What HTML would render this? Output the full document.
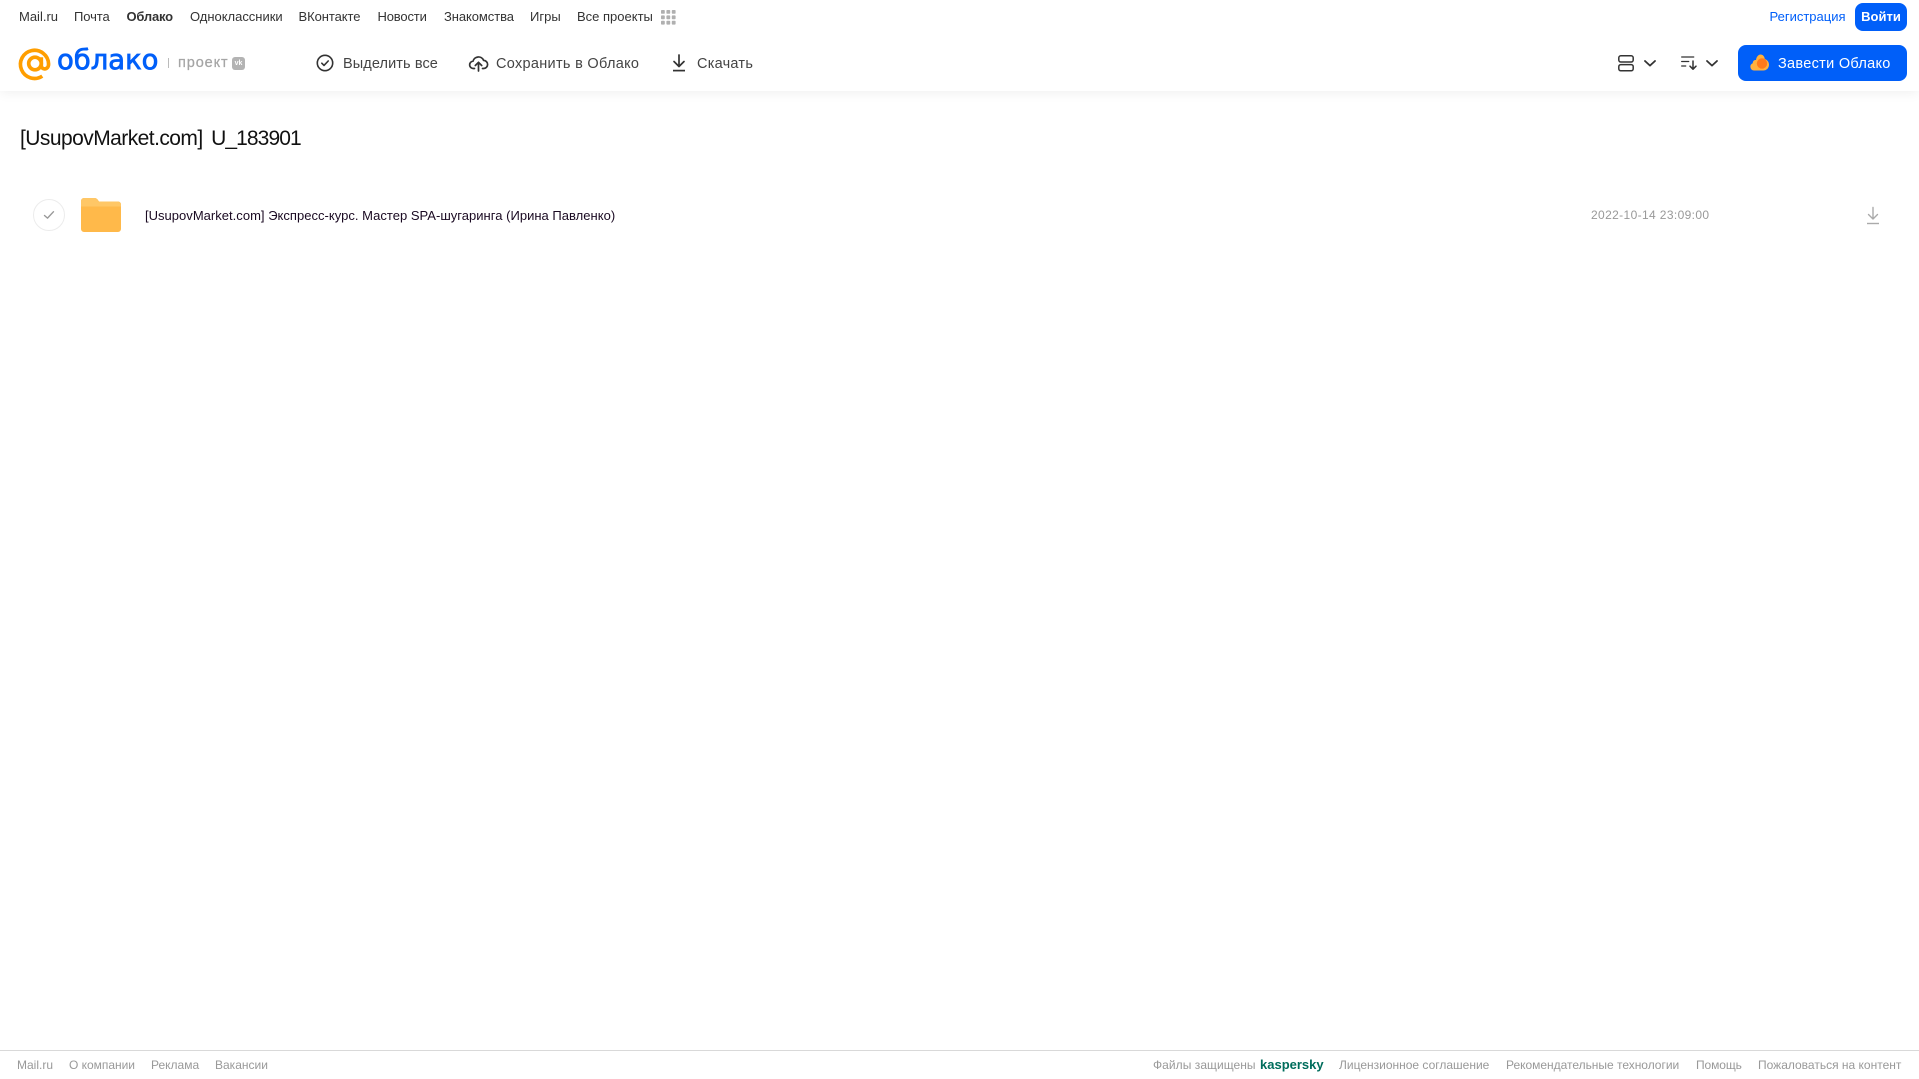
<!DOCTYPE html>
<html lang="ru"><head><meta charset="utf-8"><title>Облако</title>
<style>
html,body{margin:0;padding:0;background:#fff;width:1919px;height:1079px;overflow:hidden}
body{position:relative;font-family:"Liberation Sans",Arial,sans-serif}
a,span.t{position:absolute;white-space:nowrap;text-decoration:none;display:block}
svg{position:absolute;display:block;overflow:visible}
.n{top:8px;font-size:13px;line-height:17px;color:#333}
.a{top:55px;font-size:14.5px;line-height:18px;color:#444}
.f{top:1057px;font-size:12px;line-height:16px;color:#999}
#hd{position:absolute;left:0;top:0;width:1919px;height:91px;background:#fff;box-shadow:0 1px 12px rgba(0,0,0,.07)}
</style></head><body>
<div id="hd"></div>
<a class="n" style="left:19px;letter-spacing:0">Mail.ru</a>
<a class="n" style="left:74px;letter-spacing:-.1px">Почта</a>
<a class="n" style="left:126.5px;font-weight:bold;color:#333;letter-spacing:-.2px">Облако</a>
<a class="n" style="left:190px;letter-spacing:-.02px">Одноклассники</a>
<a class="n" style="left:298.5px;letter-spacing:-.07px">ВКонтакте</a>
<a class="n" style="left:377.5px;letter-spacing:-.16px">Новости</a>
<a class="n" style="left:444px;letter-spacing:-.08px">Знакомства</a>
<a class="n" style="left:530px;letter-spacing:0">Игры</a>
<a class="n" style="left:577px;letter-spacing:0">Все проекты</a>
<svg style="left:661px;top:10px" width="15" height="15" fill="#b0b0b0"><rect x="0" y="0" width="3.8" height="3.8" rx=".8"/><rect x="5.4" y="0" width="3.8" height="3.8" rx=".8"/><rect x="10.8" y="0" width="3.8" height="3.8" rx=".8"/><rect x="0" y="5.4" width="3.8" height="3.8" rx=".8"/><rect x="5.4" y="5.4" width="3.8" height="3.8" rx=".8"/><rect x="10.8" y="5.4" width="3.8" height="3.8" rx=".8"/><rect x="0" y="10.8" width="3.8" height="3.8" rx=".8"/><rect x="5.4" y="10.8" width="3.8" height="3.8" rx=".8"/><rect x="10.8" y="10.8" width="3.8" height="3.8" rx=".8"/></svg>
<a class="n" style="left:1769.5px;color:#005ff9;letter-spacing:0">Регистрация</a>
<a style="left:1855px;top:3px;width:52px;height:28px;border-radius:8px;background:#005ff9;color:#fff;font-size:13px;font-weight:bold;line-height:28px;text-align:center">Войти</a>

<svg style="left:19px;top:47px" width="32" height="33" viewBox="0 0 33 33" fill="none" stroke="#ff9e00" stroke-width="3.8"><circle cx="16.5" cy="16.5" r="6.5"/><path d="M23 10v8.5c0 5 7.500 5 7.500-1.500A14.500 14.500 0 1 0 24 29.500"/></svg>
<span class="t" style="left:57px;top:41px;font-size:28px;line-height:38px;color:#005ff9;-webkit-text-stroke:.8px #005ff9;font-family:'DejaVu Sans',sans-serif;transform-origin:0 50%;transform:scaleX(.98)">облако</span>
<div style="position:absolute;left:168px;top:58px;width:1px;height:10px;background:#bbb"></div>
<span class="t" style="left:178px;top:54px;font-size:14.5px;line-height:18px;color:#a5a5a5;letter-spacing:.9px;-webkit-text-stroke:.25px #a5a5a5">проект</span>
<div style="position:absolute;left:232px;top:57px;width:13px;height:13px;border-radius:3px;background:#b3b3b3;color:#fff;font-size:7px;font-weight:bold;line-height:13px;text-align:center">vk</div>

<svg style="left:316px;top:54px" width="18" height="18" viewBox="0 0 18 18" fill="none" stroke="#333" stroke-width="1.6" stroke-linecap="round" stroke-linejoin="round"><circle cx="9" cy="9" r="7.7"/><path d="M5.8 9.2l2.2 2.2 4.2-4.4"/></svg>
<a class="a" style="left:343px;letter-spacing:.1px">Выделить все</a>
<svg style="left:469px;top:54px" width="19" height="18" viewBox="0 0 19 18" fill="none" stroke="#333" stroke-width="1.7" stroke-linecap="round" stroke-linejoin="round"><path d="M5.5 14.5H4.6A3.6 3.6 0 0 1 4 7.2 5.6 5.6 0 0 1 14.6 6.4 4 4 0 0 1 14.5 14.5h-1"/><path d="M9.5 17V8.5M6.3 11.5l3.200-3.200 3.200 3.200"/></svg>
<a class="a" style="left:496px;letter-spacing:.3px">Сохранить в Облако</a>
<svg style="left:671px;top:54px" width="16" height="18" viewBox="0 0 16 18" fill="none" stroke="#333" stroke-width="1.7" stroke-linecap="round" stroke-linejoin="round"><path d="M8 1v11M3 7.500l5 5 5-5"/><path d="M2 16.600h12" stroke-linecap="butt"/></svg>
<a class="a" style="left:697px;letter-spacing:.25px">Скачать</a>

<svg style="left:1618px;top:55px" width="16" height="17" viewBox="0 0 16 17" fill="none" stroke="#333" stroke-width="1.5"><rect x=".8" y=".8" width="14.4" height="6.2" rx="2"/><rect x=".8" y="9.6" width="14.4" height="6.2" rx="2"/></svg>
<svg style="left:1644px;top:60px" width="12" height="7" viewBox="0 0 12 7" fill="none" stroke="#333" stroke-width="1.8" stroke-linecap="round" stroke-linejoin="round"><path d="M1 1l5 4.600L11 1"/></svg>
<svg style="left:1681px;top:56px" width="17" height="14" viewBox="0 0 17 14" fill="none" stroke="#333" stroke-width="1.3" stroke-linecap="round" stroke-linejoin="round"><path d="M.7 1h12M.7 5.500h7M.7 10h4"/><path d="M12 5v8M9 10.200l3 3 3-3" stroke-width="1.5"/></svg>
<svg style="left:1706px;top:60px" width="12" height="7" viewBox="0 0 12 7" fill="none" stroke="#333" stroke-width="1.8" stroke-linecap="round" stroke-linejoin="round"><path d="M1 1l5 4.600L11 1"/></svg>

<div style="position:absolute;left:1738px;top:45px;width:169px;height:36px;border-radius:8px;background:#005ff9"></div>
<svg style="left:1750px;top:54px" width="19" height="17" viewBox="0 0 19 17"><path d="M4 16.500a3.800 3.800 0 0 1-1.300-7.300C3 6 5 5.800 6 6 6.500 2.500 8.500.5 10.500.5c2.500 0 4 2 4.300 4.500 2.500.8 4.200 3 4.200 5.700 0 3.200-2.500 5.800-5.700 5.800z" fill="#ffb13d"/><circle cx="12" cy="9.500" r="5.200" fill="#ff7a1a"/></svg>
<a class="a" style="left:1778px;color:#fff;letter-spacing:.3px">Завести Облако</a>

<span class="t" style="left:20px;top:125px;font-size:21px;line-height:28px;color:#111;letter-spacing:-.55px">[UsupovMarket.com]<span style="margin-left:8.4px;letter-spacing:-.9px">U_183901</span></span>

<div style="position:absolute;left:33px;top:199px;width:30px;height:30px;border:1px solid #ececec;border-radius:50%"></div>
<svg style="left:43px;top:210px" width="12" height="10" viewBox="0 0 12 10" fill="none" stroke="#999" stroke-width="1.4" stroke-linecap="round" stroke-linejoin="round"><path d="M1.500 5.500l3 2.600 6-6.400"/></svg>
<svg style="left:81px;top:198px" width="40" height="34" viewBox="0 0 40 34"><path d="M3 0h10.500c1.600 0 2.400.7 3.300 1.800L18 3.500h19a3 3 0 0 1 3 3V31a3 3 0 0 1-3 3H3a3 3 0 0 1-3-3V3a3 3 0 0 1 3-3z" fill="#ffb94a"/><path d="M0 8.500h40v-2a3 3 0 0 0-3-3H18l-1.500-1.800C15.700.7 14.800 0 13.500 0H3a3 3 0 0 0-3 3z" fill="#ffc766"/></svg>
<span class="t" style="left:145px;top:207px;font-size:13px;line-height:17px;color:#1a0a22;letter-spacing:.02px">[UsupovMarket.com] Экспресс-курс. Мастер SPA-шугаринга (Ирина Павленко)</span>
<span class="t" style="left:1591px;top:207px;font-size:12px;line-height:17px;color:#999;letter-spacing:.37px">2022-10-14 23:09:00</span>
<svg style="left:1866px;top:206px" width="14" height="19" viewBox="0 0 14 19" fill="none" stroke="#aaa" stroke-width="1.4" stroke-linecap="round" stroke-linejoin="round"><path d="M7 1.500v11M2.500 8.500L7 13l4.500-4.500"/><path d="M1 17.500h12" stroke-linecap="butt"/></svg>

<div style="position:absolute;left:0;top:1050px;width:1919px;height:1px;background:#d9d9d9"></div>
<a class="f" style="left:17px;letter-spacing:0">Mail.ru</a>
<a class="f" style="left:69px;letter-spacing:-.02px">О компании</a>
<a class="f" style="left:151px;letter-spacing:0">Реклама</a>
<a class="f" style="left:215px;letter-spacing:0">Вакансии</a>
<a class="f" style="left:1153px;letter-spacing:.05px">Файлы защищены</a>
<span class="t" style="left:1260px;top:1057px;font-size:13px;line-height:16px;font-weight:bold;color:#006d5c">kaspersky</span>
<a class="f" style="left:1339px;letter-spacing:0">Лицензионное соглашение</a>
<a class="f" style="left:1506px;letter-spacing:-.02px">Рекомендательные технологии</a>
<a class="f" style="left:1696px;letter-spacing:-.1px">Помощь</a>
<a class="f" style="left:1758px;letter-spacing:0">Пожаловаться на контент</a>
</body></html>
